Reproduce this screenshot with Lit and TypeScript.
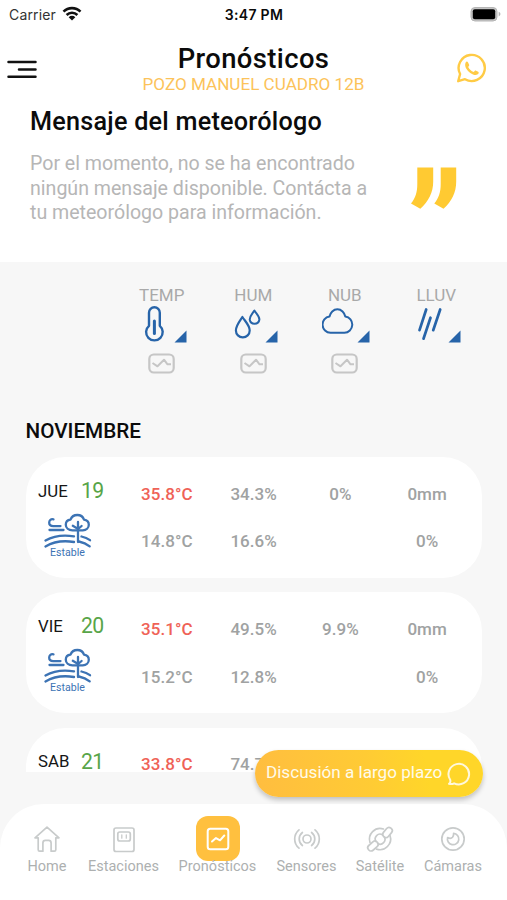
import { LitElement, html, svg, css } from "lit";
import { customElement, property } from "lit/decorators.js";
import { classMap } from "lit/directives/class-map.js";

interface Day {
  name: string;
  num: string;
  values: string[][];
}

const days: Day[] = [
  { name: "JUE", num: "19", values: [["35.8°C", "14.8°C"], ["34.3%", "16.6%"], ["0%", ""], ["0mm", "0%"]] },
  { name: "VIE", num: "20", values: [["35.1°C", "15.2°C"], ["49.5%", "12.8%"], ["9.9%", ""], ["0mm", "0%"]] },
  { name: "SAB", num: "21", values: [["33.8°C", ""], ["74.7%", ""], ["", ""], ["", ""]] },
];

const tempIcon = svg`<path d="M10 19.800V6.700a5.400 5.400 0 0 1 10.800 0v13.100a8.300 8.300 0 1 1-10.800 0z" stroke-width="2.400"/><path d="M15.400 15v12.500" stroke-width="3"/>`;
const humIcon = svg`<path d="M11.400 11C8.500 15.500 4.900 19.500 4.900 24.500a6.700 6.700 0 0 0 13.800 0c0-5-4.400-9-7.300-13.500z"/><path d="M23.400 4.500c-1.900 3.200-4.700 5.500-4.700 9a4.900 4.900 0 0 0 9.700 0c0-3.500-3.100-5.800-5-9z" stroke-width="2"/>`;
const cloudIcon = svg`<path d="M8.500 26.800a8.200 8.200 0 0 1-1-16.300c.8-3.800 3.900-7.200 7.900-7.200s7.100 3.400 7.900 7.200a8.200 8.200 0 0 1-.9 16.300z" stroke-width="2"/>`;
const rainIcon = svg`<path d="M12.200 3.500 5.500 24.200M16.500 11.700 9.500 32.700M26.200 3.500 19.200 24.200" stroke-width="2.700"/>`;

const columns = [
  { label: "TEMP", icon: tempIcon, chart: true },
  { label: "HUM", icon: humIcon, chart: true },
  { label: "NUB", icon: cloudIcon, chart: true },
  { label: "LLUV", icon: rainIcon, chart: false },
];

const tabs = [
  { label: "Home", width: 75, icon: svg`<path d="M3 13.800 15 3.200l12 10.600h-3.200v11.900q0 1.500-1.500 1.500h-3.200v-8.300q0-2.500-2.500-2.500h-3.200q-2.500 0-2.500 2.500v8.300H7.700q-1.500 0-1.500-1.500V13.800z"/>` },
  { label: "Estaciones", width: 78, icon: svg`<rect x="5" y="4" width="20" height="23.500" rx="2"/><rect x="8.800" y="8" width="12.500" height="9" rx="2"/><path d="M12.800 10.800v3.400M17.300 10.800v3.400" stroke-width="1.300"/>` },
  { label: "Pronósticos", width: 110, icon: svg`<rect x="4.700" y="4.700" width="20.600" height="20.600" rx="2.500" stroke-width="2"/><path d="m9 17.500 4-3.400 4 2.200 4.300-4.800" stroke-width="2"/>`, active: true },
  { label: "Sensores", width: 68, icon: svg`<circle cx="15" cy="15" r="4"/><path d="M10.400 8.500a8.200 8.200 0 0 0 0 13M19.600 8.500a8.200 8.200 0 0 1 0 13M7 5.800a12 12 0 0 0 0 18.400M23 5.800a12 12 0 0 1 0 18.400"/>` },
  { label: "Satélite", width: 79, icon: svg`<path d="M11 17.500a4.800 4.800 0 0 1 6.500-6.700M19.200 12.800a4.800 4.800 0 0 1-6.500 6.700"/><path d="M18.500 5A10.700 10.700 0 0 0 5 18.500M11.500 25.100A10.700 10.700 0 0 0 25 11.500"/><rect x="17" y="5.300" width="11" height="6.400" rx="3" transform="rotate(-50 22.500 8.500)"/><rect x="2.200" y="18.800" width="11.500" height="6.400" rx="3" transform="rotate(-42 8 22)"/>` },
  { label: "Cámaras", width: 67, icon: svg`<circle cx="15" cy="15" r="11.200"/><path d="M15.600 9.300A5.700 5.700 0 1 1 9.600 13.500q3.200 1.800 4.900-.3 1.300-1.700 1.100-3.900z"/>` },
];

@customElement("forecast-card")
class ForecastCard extends LitElement {
  @property({ attribute: false }) day!: Day;

  static styles = css`
    :host { display: flex; height: 121px; box-sizing: border-box; background: #fff; border-radius: 39px; padding-right: 11.500px; flex: none; }
    .date { width: 97.500px; flex: none; display: flex; flex-direction: column; }
    .name-row { display: flex; padding: 20.500px 0 0 12px; height: 26px; align-items: center; }
    .name { width: 43px; font-size: 16.800px; color: #161616; }
    .num { font-size: 21.200px; color: #58a548; letter-spacing: -0.600px; }
    .weather { width: 48px; margin: 9px 0 0 18px; display: flex; flex-direction: column; align-items: center; color: #3c73b4; }
    .weather svg { width: 48px; height: 38px; }
    .caption { font-size: 10.600px; line-height: 12px; margin: -4px 0 0 -1px; }
    .col { flex: 1; display: flex; flex-direction: column; align-items: center; padding-top: 24.600px; color: #a0a2a2; font-size: 17px; font-weight: 500; letter-spacing: 0.050px; }
    .val { height: 47.700px; line-height: 24px; }
    .hot { color: #ef6257; }
  `;

  render() {
    return html`
      <div class="date">
        <div class="name-row"><span class="name">${this.day.name}</span><span class="num">${this.day.num}</span></div>
        <div class="weather">
          <svg viewBox="0 0 48 38" fill="none" stroke="currentColor" stroke-width="2.300" stroke-linecap="round" stroke-linejoin="round">
            <path d="M9.500 6.300c-3-.5-4.300 1.300-4.300 3.500 0 2.300 1.600 3.300 4 3.300h7.300M5.500 17h14"/>
            <path d="M28.500 17.300c-4 0-6.700-2.400-6.700-5.500 0-2.800 1.900-4.800 4.700-5.100C27.600 3.700 30.200 2 33.300 2c3 0 5.700 1.700 6.700 4.600 2.900.4 4.800 2.400 4.800 5.200 0 3.100-2.600 5.500-6 5.500z"/>
            <path d="M34 9v20M28.800 12.800l5.300 3.200 3.500-3"/>
            <path d="M1.500 27.500c8.200-4.700 17.500-6 28.500-4.200M1.500 33.500c8-4.800 17.500-6.300 28.500-4.500M37.500 23.500c3.300.7 6.100 1.900 8.500 3.700M35 28.500c4 .8 7.700 2.500 10.700 4.900"/>
          </svg>
          <span class="caption">Estable</span>
        </div>
      </div>
      ${this.day.values.map((pair, i) => html`
        <div class="col">
          <span class=${classMap({ val: true, hot: i === 0 })}>${pair[0]}</span>
          <span class="val">${pair[1]}</span>
        </div>`)}
    `;
  }
}

@customElement("app-root")
class AppRoot extends LitElement {
  static styles = css`
    :host { display: block; position: relative; width: 507px; height: 900px; overflow: hidden; background: #f7f7f7; font-family: Roboto, sans-serif; color: #0b0b0b; }
    .top { background: #fff; height: 261.500px; }
    .status { height: 28px; display: grid; grid-template-columns: 1fr auto 1fr; align-items: center; padding: 0 6px 0 9px; box-sizing: border-box; font-family: Inter, sans-serif; }
    .carrier { display: flex; align-items: center; gap: 6px; font-size: 14px; color: #333; letter-spacing: 0.150px; }
    .carrier svg { width: 20px; height: 15px; margin-top: -2px; }
    .clock { font-size: 14px; font-weight: 600; letter-spacing: 0.300px; margin-left: -2px; }
    .battery { justify-self: end; width: 31px; height: 16px; margin-top: -1px; }
    .head { display: grid; grid-template-columns: 60px 1fr 60px; height: 78px; padding-top: 15px; box-sizing: border-box; }
    .burger { width: 32px; height: 24px; margin: 14px 0 0 6px; }
    .chat { width: 32px; height: 32px; margin: 9px 0 0 7.500px; }
    .title { font-size: 27.400px; line-height: 32px; font-weight: 500; letter-spacing: 0.400px; }
    .titles { display: flex; flex-direction: column; align-items: center; white-space: nowrap; }
    .place { font-size: 17.100px; line-height: 20px; color: #fcc35a; margin-top: -1px; }
    .message { display: flex; padding: 0 50px 0 30px; }
    .copy { width: 381px; }
    .heading { font-size: 25.200px; font-weight: 500; line-height: 32px; white-space: nowrap; letter-spacing: 0.250px; }
    .note { font-size: 19.600px; line-height: 24.500px; color: #b6b6b6; white-space: nowrap; margin-top: 14px; letter-spacing: -0.010px; }
    .quote { width: 46px; height: 43px; margin-top: 60.500px; flex: none; }
    .measures { display: grid; grid-template-columns: repeat(4, 91.500px); padding: 23px 0 0 116px; height: 156px; box-sizing: border-box; }
    .measure { display: flex; flex-direction: column; align-items: center; }
    .label { font-size: 17px; line-height: 21.500px; color: #a9a9a9; }
    .picker { display: flex; align-items: flex-end; width: 50px; height: 37px; color: #2764a9; }
    .picker .icon { width: 32px; height: 37px; margin-left: 2.500px; }
    .picker .corner { width: 13px; height: 13px; margin: 0 0 0 2.500px; }
    .chart { width: 27px; height: 21px; margin-top: 9.500px; }
    .month { font-size: 20.700px; line-height: 26px; font-weight: 500; padding-left: 25.500px; height: 39.500px; }
    .list { display: flex; flex-direction: column; gap: 14.300px; padding: 0 25px 0 26px; height: 315px; overflow: hidden; }
    .tabs { display: flex; box-sizing: border-box; margin-top: 32px; height: 96px; background: #fff; border-radius: 44px 44px 0 0; padding: 12px 0 0 9.500px; }
    .tab { display: flex; flex-direction: column; align-items: center; color: #adb0b0; white-space: nowrap; }
    .tile { width: 44px; height: 45px; border-radius: 12px; display: flex; align-items: center; justify-content: center; color: #c8cbcb; }
    .tile svg { width: 30px; height: 30px; }
    .active { background: #ffc03f; color: #fff; }
    .tab-label { font-size: 14.500px; line-height: 18px; margin-top: -3px; letter-spacing: 0.020px; }
    .fab { position: absolute; left: 255px; top: 749.500px; width: 228px; height: 47px; box-sizing: border-box; border-radius: 24px; padding: 0 11px 3px; display: flex; align-items: center; justify-content: space-between; background: linear-gradient(80deg, #ffbd40, #ffcb34 50%, #ffd629 75%); color: #fffbe9; font-size: 17.100px; line-height: 20px; box-shadow: 0 3px 5px rgba(0, 0, 0, 0.22); white-space: nowrap; }
    .fab svg { width: 25px; height: 25px; margin-top: 3px; }
  `;

  render() {
    return html`
      <div class="top">
        <div class="status">
          <div class="carrier">Carrier
            <svg viewBox="0 0 20 15" fill="none" stroke="#111" stroke-width="2.600"><path d="M1.500 5.700a12 12 0 0 1 17 0M4.600 9a7.700 7.700 0 0 1 10.800 0"/><path d="M10 14.500 6.700 11.200a4.700 4.700 0 0 1 6.600 0z" fill="#111" stroke="none"/></svg>
          </div>
          <span class="clock">3:47 PM</span>
          <svg class="battery" viewBox="0 0 31 16"><rect x="1" y="1.500" width="26" height="13.500" rx="4" fill="#c4c4c4" stroke="#b5b5b5" stroke-width="1"/><rect x="2.800" y="3.300" width="22.400" height="9.900" rx="2" fill="#000"/><path d="M28.700 5.800v4.600q1.800-.8 1.800-2.300t-1.800-2.300z" fill="#b5b5b5"/></svg>
        </div>
        <div class="head">
          <svg class="burger" viewBox="0 0 32 24" stroke="#111" stroke-width="2.500" stroke-linecap="round"><path d="M2.500 5H29.500M13 12.500H29.500M2.500 19.700H29.500"/></svg>
          <div class="titles"><span class="title">Pronósticos</span><span class="place">POZO MANUEL CUADRO 12B</span></div>
          <svg class="chat" viewBox="0 0 32 32" fill="none" stroke="#ffcb45" stroke-width="2.400" stroke-linejoin="round"><path d="M3.200 29.200 5.100 22a13.100 13.100 0 1 1 4.900 5.200z"/><path d="M10.500 10.700c.9-1.400 1.800-1.500 2.600-.2l1 2.200c.3.800-.1 1.300-.9 2.200 1.300 2.500 2.900 4 5.500 5.100 1-.9 1.400-1.800 2.400-1.300l2.100 1.100c1.200.7.300 2.200-.9 2.800-1.800 1-4.700-.1-7-1.700-3-2.200-6.200-6.200-4.800-10.200z" fill="#ffcb45" stroke="none"/></svg>
        </div>
        <div class="message">
          <div class="copy">
            <div class="heading">Mensaje del meteorólogo</div>
            <div class="note">Por el momento, no se ha encontrado<br>ningún mensaje disponible. Contácta a<br>tu meteorólogo para información.</div>
          </div>
          <svg class="quote" viewBox="0 0 46 43" fill="#ffca32"><path d="M6.300.500h15.900v14C22.200 25.500 17.500 34.500 9.300 41.700L0 36.500C4.500 31 6.300 25 6.300 17zM29.700.500h15.500v14C45.200 25.500 40.700 34.500 32.500 41.700L23.300 36.500c4.500-5.500 6.400-11.500 6.400-19.500z"/></svg>
        </div>
      </div>
      <div class="measures">
        ${columns.map((c) => html`
          <div class="measure">
            <span class="label">${c.label}</span>
            <div class="picker">
              <svg class="icon" viewBox="0 0 32 37" fill="none" stroke="currentColor" stroke-width="2.200" stroke-linecap="round" stroke-linejoin="round">${c.icon}</svg>
              <svg class="corner" viewBox="0 0 13 13" fill="currentColor"><path d="M12.500.500v12H.500z"/></svg>
            </div>
            ${c.chart ? html`<svg class="chart" viewBox="0 0 27 21" fill="none" stroke="#c6c6c6" stroke-width="2.200" stroke-linejoin="round"><rect x="1.300" y="1.500" width="24.400" height="18" rx="4.500"/><path d="m4.500 10 5 3.300 6.500-6.600 3.500 4.600h3.500" stroke-width="2"/></svg>` : ""}
          </div>`)}
      </div>
      <div class="month">NOVIEMBRE</div>
      <div class="list">${days.map((d) => html`<forecast-card .day=${d}></forecast-card>`)}</div>
      <div class="tabs">
        ${tabs.map((t) => html`
          <div class="tab" style="width:${t.width}px">
            <div class=${classMap({ tile: true, active: !!t.active })}>
              <svg viewBox="0 0 30 30" fill="none" stroke="currentColor" stroke-width="1.700" stroke-linecap="round" stroke-linejoin="round">${t.icon}</svg>
            </div>
            <span class="tab-label">${t.label}</span>
          </div>`)}
      </div>
      <div class="fab">Discusión a largo plazo
        <svg viewBox="0 0 25 25" fill="none" stroke="#fff8dc" stroke-width="2" stroke-linejoin="round"><path d="M2 22.800c1.200-.8 1.700-2.200 1.200-4a10.300 10.300 0 1 1 3.900 3.500c-1.500.9-3.200 1-5.100.5z"/></svg>
      </div>
    `;
  }
}
